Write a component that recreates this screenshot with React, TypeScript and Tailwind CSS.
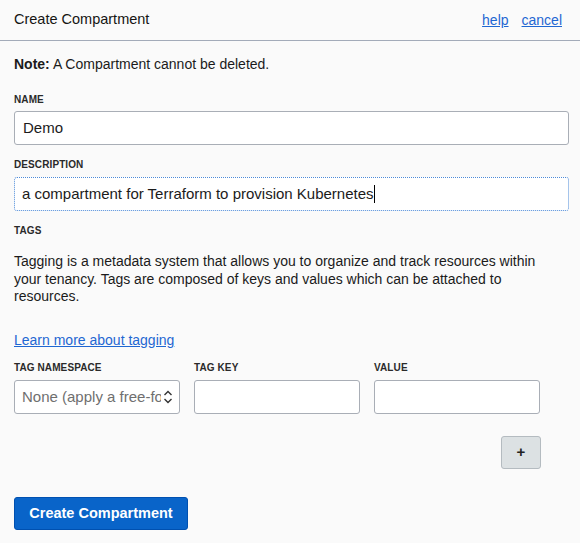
import React from "react";

const font = { fontFamily: '"Liberation Sans", Arial, sans-serif' };

function Label({ children, className = "" }: { children: React.ReactNode; className?: string }) {
  return (
    <div className={`text-[10px] leading-[14px] font-bold uppercase text-[#2a2a2a] tracking-[0.01em] ${className}`}>
      {children}
    </div>
  );
}

export default function App() {
  return (
    <div className="w-[580px] h-[543px] bg-[#fafafa] text-[#1b1b1b] overflow-hidden" style={font}>
      {/* Header */}
      <div className="h-[41px] border-b border-[#a3abb9] flex items-center justify-between pl-[14px] pr-[18px]">
        <span className="text-[14.5px] font-medium text-[#161513]">Create Compartment</span>
        <div className="flex gap-[13px] text-[14px] text-[#1f67d2]">
          <a className="underline">help</a>
          <a className="underline">cancel</a>
        </div>
      </div>

      <div className="px-[14px]">
        <p className="mt-[13px] text-[14px] leading-[20px]">
          <span className="font-bold">Note:</span> A Compartment cannot be deleted.
        </p>

        <Label className="mt-[19px] mb-[4px]">Name</Label>
        <div className="h-[34px] w-[555px] bg-white border border-[#a9aeb6] rounded-[3px] flex items-center px-[8px] text-[15px]">
          Demo
        </div>

        <Label className="mt-[13px] mb-[5px]">Description</Label>
        <div className="h-[34px] w-[555px] bg-white border border-dotted border-[#4d8ad8] rounded-[3px] flex items-center px-[7px] text-[15px]">
          a compartment for Terraform to provision Kubernetes
          <span className="inline-block w-px h-[18px] bg-black" />
        </div>

        <Label className="mt-[13px]">Tags</Label>
        <p className="mt-[15px] text-[14px] leading-[17.5px] w-[552px]">
          Tagging is a metadata system that allows you to organize and track resources within
          <br />
          your tenancy. Tags are composed of keys and values which can be attached to
          <br />
          resources.
        </p>

        <a className="block mt-[24.5px] text-[14px] leading-[20px] text-[#1f67d2] underline">
          Learn more about tagging
        </a>

        <div className="w-[527px] mt-[11px]">
          <div className="grid grid-cols-3 gap-x-[14px] w-[526px]">
            <Label className="mb-[5px]">Tag Namespace</Label>
            <Label className="mb-[5px]">Tag Key</Label>
            <Label className="mb-[5px]">Value</Label>
            <div className="h-[34px] bg-white border border-[#a9aeb6] rounded-[3px] flex items-center pl-[7px] pr-[6px]">
              <span className="flex-1 overflow-hidden whitespace-nowrap text-[15px] text-[#6f6f6f]">
                None (apply a free-form tag)
              </span>
              <svg width="10" height="16" viewBox="0 0 10 16" className="ml-[2px] shrink-0">
                <path d="M1.5 6 L5 2.5 L8.5 6" fill="none" stroke="#333" strokeWidth="1.4" />
                <path d="M1.5 10 L5 13.5 L8.5 10" fill="none" stroke="#333" strokeWidth="1.4" />
              </svg>
            </div>
            <div className="h-[34px] bg-white border border-[#a9aeb6] rounded-[3px]" />
            <div className="h-[34px] bg-white border border-[#a9aeb6] rounded-[3px]" />
          </div>
          <div className="flex justify-end mt-[22px]">
            <button className="w-[40px] h-[33px] bg-[#dce1e3] border border-[#b4bbc0] rounded-[3px] text-[15px] font-bold text-[#222] flex items-center justify-center">
              +
            </button>
          </div>
        </div>

        <button className="mt-[28px] h-[33px] w-[174px] bg-[#0964c9] border border-[#0050b0] rounded-[3px] text-white text-[14.5px] font-bold flex items-center justify-center">
          Create Compartment
        </button>
      </div>
    </div>
  );
}
